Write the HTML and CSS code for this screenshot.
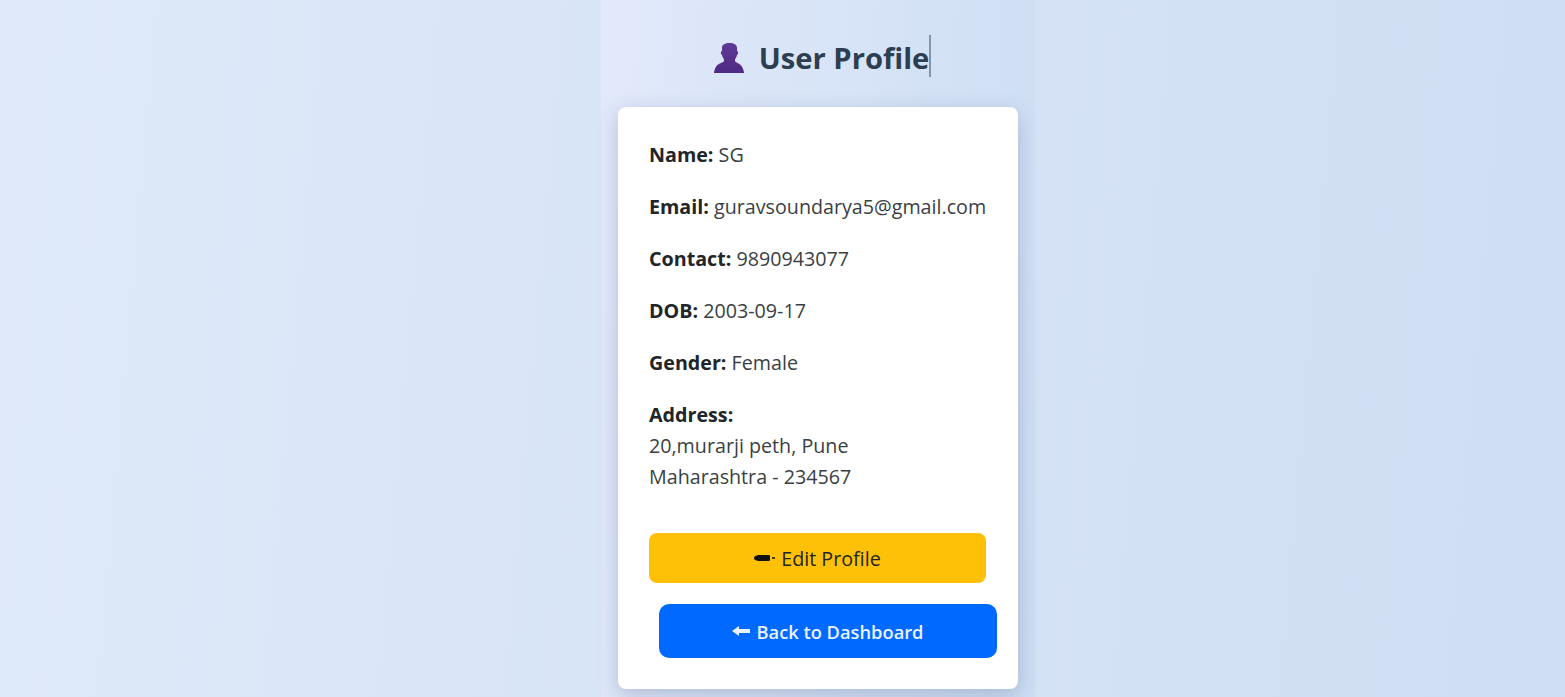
FILE: index.html
```html
<!DOCTYPE html>
<html lang="en">
<head>
    <meta charset="UTF-8">
    <meta name="viewport" content="width=device-width, initial-scale=1.0">
    <title>User Profile</title>
    <link rel="stylesheet" href="styles.css">
</head>
<body>
    <div class="container">
        <h1 class="title">
            <svg class="title-icon" width="30" height="30" viewBox="0 0 30 30">
                <defs>
                    <linearGradient id="bust" x1="0" y1="0" x2="0" y2="1">
                        <stop offset="0" stop-color="#5f3a96"/>
                        <stop offset="1" stop-color="#4f2a85"/>
                    </linearGradient>
                </defs>
                <path fill="url(#bust)" d="M8 5C8 1.500 11 0 15.500 0S23 1.500 23 5V8C24.500 8 24.500 11 23 12C22.500 14 21.500 15.500 21 16.500V18C22 20 26 20.500 27.500 23C29 25.500 30 28 30 30H0C0 28 1 25.500 2.500 23C4 20.500 9 20 10 18V16.500C9.500 15.500 8.500 14 8 12C6.500 11 6.500 8 8 8Z"/>
            </svg>
            <span class="typed">User Profile</span>
        </h1>

        <div class="card">
            <p><strong>Name:</strong> SG</p>
            <p><strong>Email:</strong> guravsoundarya5@gmail.com</p>
            <p><strong>Contact:</strong> 9890943077</p>
            <p><strong>DOB:</strong> 2003-09-17</p>
            <p><strong>Gender:</strong> Female</p>
            <p><strong>Address:</strong><br>20,murarji peth, Pune<br>Maharashtra - 234567</p>

            <a class="btn btn-edit" href="#">
                <svg width="21" height="8" viewBox="0 0 21 8">
                    <path fill="#111" d="M0 4Q0 2 3 1.500L4 1H15Q16 1 16 2V6Q16 7 15 7H4L3 6.500Q0 6 0 4ZM18 3.300H21V4.700H18Z"/>
                </svg>
                Edit Profile
            </a>
            <a class="btn btn-back" href="#">
                <svg width="18" height="12" viewBox="0 0 18 12">
                    <path fill="#eaf3ff" d="M0 6L7 1V4H18V8H7V11Z"/>
                </svg>
                Back to Dashboard
            </a>
        </div>
    </div>
</body>
</html>
```

FILE: styles.css
```css
body {
    margin: 0;
    height: 697px;
    display: grid;
    grid-template-columns: 601px 434px;
    font-family: "Open Sans", "Noto Sans", sans-serif;
    background: linear-gradient(95deg, #dfe9fa, #cfdef3);
    overflow: hidden;
}
.container {
    grid-column: 2;
    box-sizing: border-box;
    padding: 35px 17px 0;
    background: linear-gradient(95deg, #e2e9fb, #cddef3);
}
.title {
    display: flex;
    justify-content: center;
    align-items: center;
    gap: 15px;
    margin: 0 0 30px;
    padding-left: 9px;
    height: 42px;
    font-size: 29.200px;
    font-weight: 700;
    color: #2c3e50;
}
.title-icon {
    margin-top: 4px;
}
.typed {
    box-sizing: border-box;
    border-right: 2px solid #8296ad;
    line-height: 38px;
    padding-top: 4px;
    height: 42px;
}
.card {
    box-sizing: border-box;
    width: 400px;
    height: 582px;
    padding: 32px 20px 0 31px;
    background: #fff;
    border-radius: 8px;
    box-shadow: 0 6px 20px rgba(50, 70, 110, 0.26);
    color: #3a3f44;
    font-size: 19.700px;
    line-height: 31px;
}
.card p {
    margin: 0 0 21px;
}
.card strong {
    color: #212529;
}
.btn {
    display: flex;
    justify-content: center;
    align-items: center;
    gap: 6px;
    box-sizing: border-box;
    text-decoration: none;
}
.btn-edit {
    width: 337px;
    height: 50px;
    margin-top: 41px;
    background: #ffc107;
    border-radius: 8px;
    color: #212529;
}
.btn-back {
    width: 338px;
    height: 54px;
    margin: 21px 0 0 10px;
    background: #0069ff;
    border-radius: 10px;
    color: #eaf3ff;
    font-size: 18.300px;
    font-weight: 600;
}
```
